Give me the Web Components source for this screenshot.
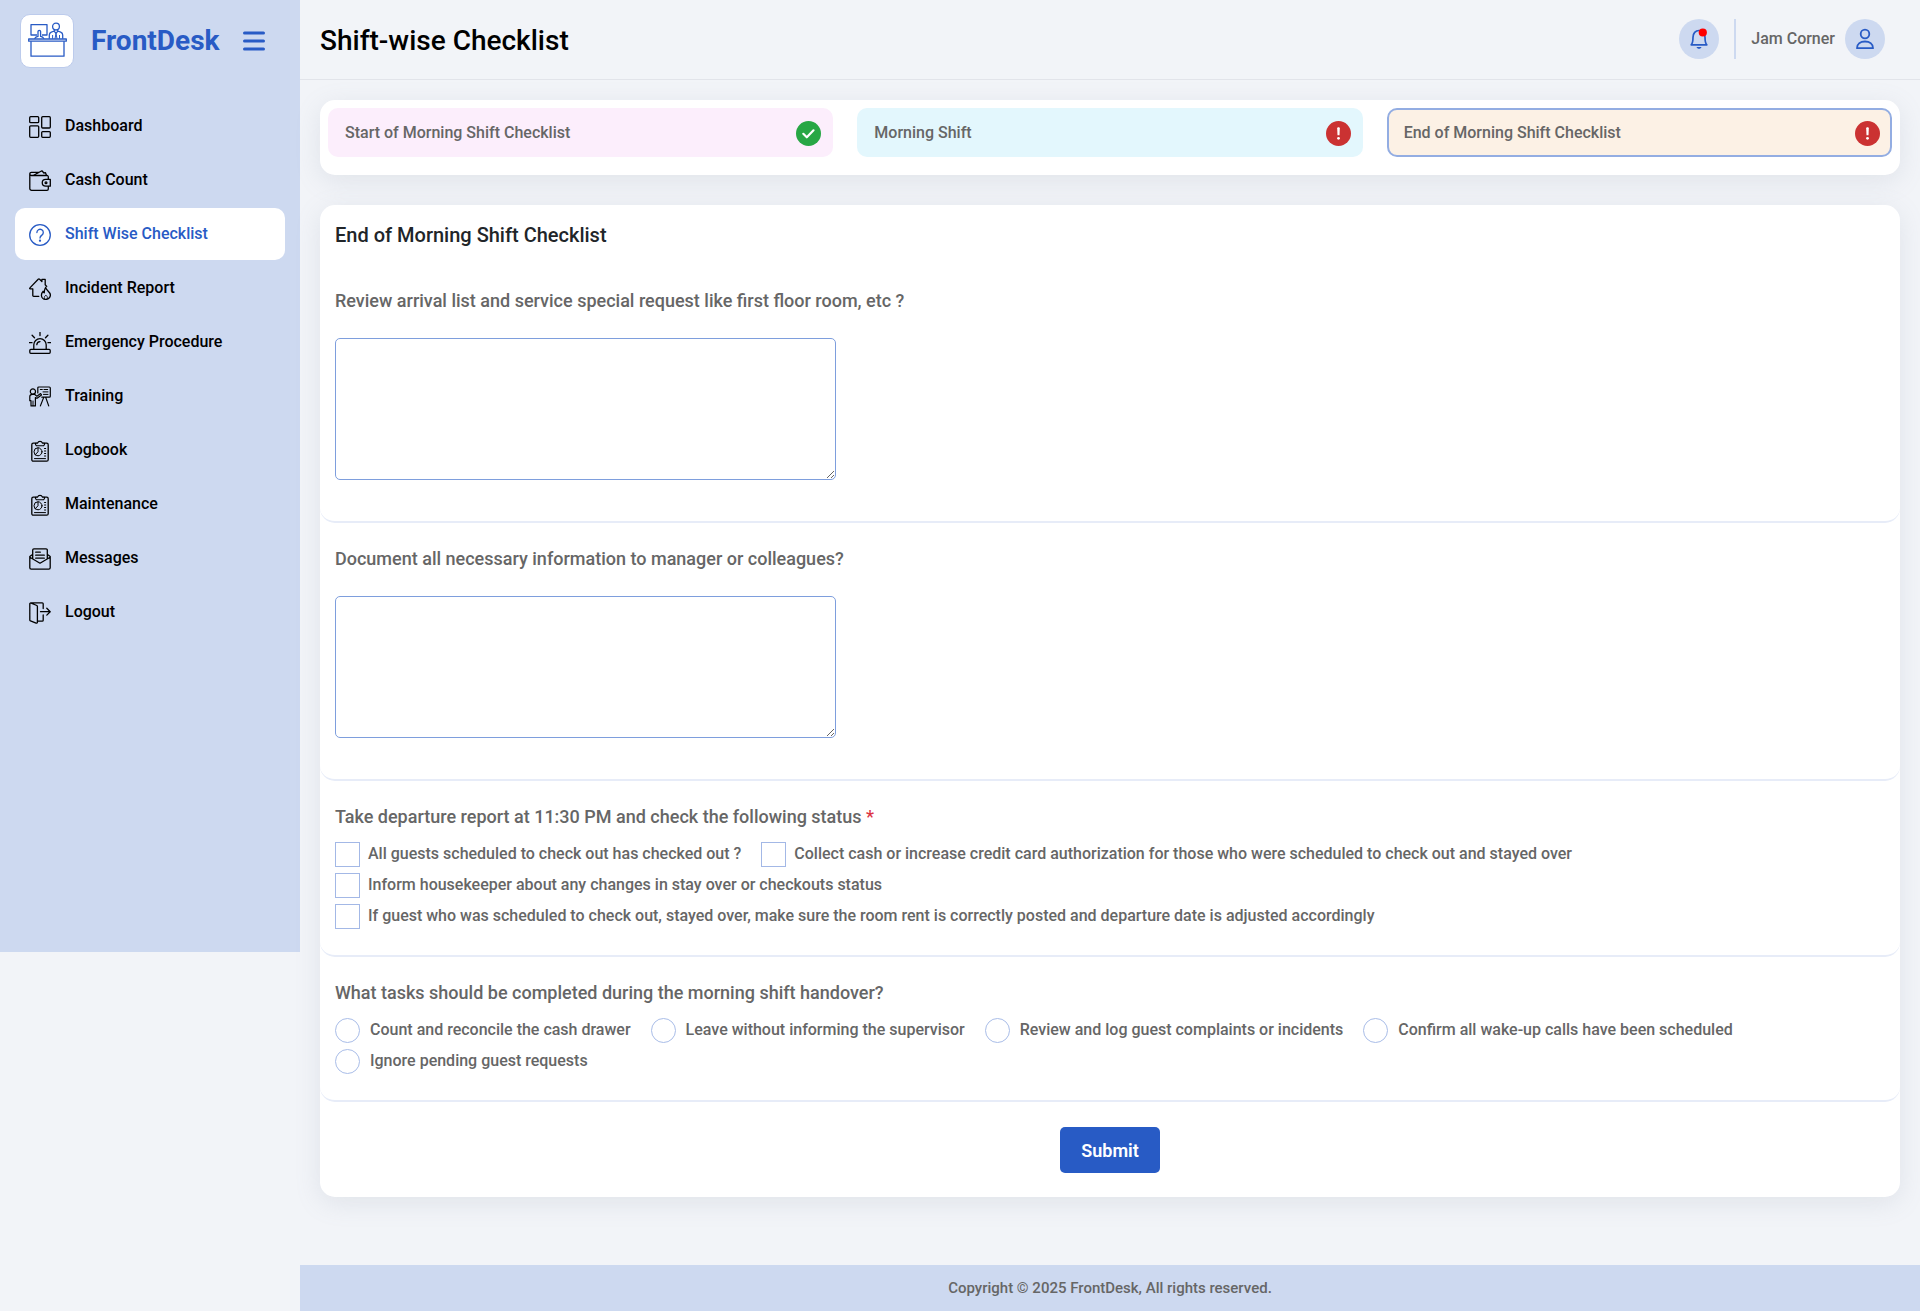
<!DOCTYPE html>
<html lang="en">
<head>
<meta charset="utf-8">
<meta name="viewport" content="width=device-width, initial-scale=1">
<title>Shift-wise Checklist</title>
<style>
  :root {
    --blue: #285bc5;
    --pale: #cdd9f0;
    --page: #f2f4f8;
    --muted: #666;
    --shadow: 0 6px 26px rgba(130, 140, 160, .16);
  }
  body {
    margin: 0;
    background: var(--page);
    color: var(--muted);
    font: 500 16px/24px Roboto, sans-serif;
  }
</style>
</head>
<body>
<fd-app>
  <fd-sidebar slot="side">
    <fd-nav-item icon="dashboard">Dashboard</fd-nav-item>
    <fd-nav-item icon="wallet">Cash Count</fd-nav-item>
    <fd-nav-item icon="help" active>Shift Wise Checklist</fd-nav-item>
    <fd-nav-item icon="incident">Incident Report</fd-nav-item>
    <fd-nav-item icon="siren">Emergency Procedure</fd-nav-item>
    <fd-nav-item icon="training">Training</fd-nav-item>
    <fd-nav-item icon="clipboard">Logbook</fd-nav-item>
    <fd-nav-item icon="clipboard">Maintenance</fd-nav-item>
    <fd-nav-item icon="mail">Messages</fd-nav-item>
    <fd-nav-item icon="logout">Logout</fd-nav-item>
  </fd-sidebar>
  <fd-topbar slot="top" user="Jam Corner">Shift-wise Checklist</fd-topbar>
  <fd-tabs>
    <fd-tab tone="pink" state="done">Start of Morning Shift Checklist</fd-tab>
    <fd-tab tone="cyan" state="due">Morning Shift</fd-tab>
    <fd-tab tone="sand" state="due" active>End of Morning Shift Checklist</fd-tab>
  </fd-tabs>
  <fd-checklist heading="End of Morning Shift Checklist">
    <fd-text-question>Review arrival list and service special request like first floor room, etc ?</fd-text-question>
    <fd-text-question>Document all necessary information to manager or colleagues?</fd-text-question>
    <fd-choice-question type="checkbox" name="departure" required question="Take departure report at 11:30 PM and check the following status">
      <span>All guests scheduled to check out has checked out ?</span>
      <span>Collect cash or increase credit card authorization for those who were scheduled to check out and stayed over</span>
      <span>Inform housekeeper about any changes in stay over or checkouts status</span>
      <span>If guest who was scheduled to check out, stayed over, make sure the room rent is correctly posted and departure date is adjusted accordingly</span>
    </fd-choice-question>
    <fd-choice-question type="radio" name="handover" question="What tasks should be completed during the morning shift handover?">
      <span>Count and reconcile the cash drawer</span>
      <span>Leave without informing the supervisor</span>
      <span>Review and log guest complaints or incidents</span>
      <span>Confirm all wake-up calls have been scheduled</span>
      <span>Ignore pending guest requests</span>
    </fd-choice-question>
  </fd-checklist>
  <fd-footer slot="foot">Copyright © 2025 FrontDesk, All rights reserved.</fd-footer>
</fd-app>

<script>
const ICONS = {
  dashboard: '<rect x=".7" y=".7" width="9" height="6" rx="1"/><rect x=".7" y="9.8" width="9" height="11.5" rx="1"/><rect x="12.7" y=".7" width="8.6" height="11.3" rx="1"/><rect x="12.7" y="15.6" width="8.6" height="5.7" rx="1"/>',
  wallet: '<path d="M19.3 9V6.8a1.3 1.3 0 0 0-1.3-1.3H2.4A1.6 1.6 0 0 1 2.4 2.3h3.8M.8 3.9v14.6a1.8 1.8 0 0 0 1.8 1.8H18a1.3 1.3 0 0 0 1.3-1.3v-2.5"/><path d="M4.8 5.2 12.9.8l2 2.2 1.6-.3.9 2.5M8 3.2l-1.5-.9h3"/><path d="M21.3 9.3h-4.6a3.4 3.4 0 0 0 0 6.9h4.6z"/><circle cx="17" cy="12.7" r=".9"/>',
  help: '<circle cx="11" cy="11" r="10.3"/><path d="M7.9 8.5a3.2 3.2 0 1 1 5 2.6c-1.2.8-1.9 1.5-1.9 3"/><circle cx="11" cy="16.7" r=".5" fill="currentColor"/>',
  incident: '<path d="M9.8 18.3H4.6a.8.8 0 0 1-.8-.8v-6.700H1.200c-.6 0-.7-.5-.3-.9L9.200 1.200a1 1 0 0 1 1.400 0l2.300 2.300V1.400h3.300v5.400l1.500 1.600"/><path d="M16.700 9.300c.2 3.200 4.700 4.300 4.700 7.700a4.500 4.300 0 0 1-9 .2c0-1.600.7-2.800 1.800-4 .1 1 .5 1.500 1.100 1.700-.1-2.300.3-4 1.400-5.600z"/><path d="M15.400 20.600c-.6-1.300.2-2.400 1.500-3.500 1.200 1.100 2 2.200 1.400 3.500" stroke-width=".8"/>',
  siren: '<rect x=".8" y="17.400" width="20.400" height="3.900" rx="1"/><path d="M4.800 17.200v-4.400a6.200 6.200 0 0 1 12.400 0v4.400M7.800 12.700A3.300 3.300 0 0 1 11 9.600M11 .3v3.200M3.100 3.200l2.400 2.600M18.900 3.200l-2.400 2.600M.3 10.700H3M19 10.700h2.700"/>',
  training: '<g stroke-width="1.200"><circle cx="3.900" cy="5.500" r="2.600"/><path d="M2 19.900v-5.200H.8v-4.200c0-1.500 1.200-2.200 2.600-2.200h2.100l2.400 1.900 3.700-2.600.9 1.300-4.400 3.300-1.700-.7v8.400zM8.800 6.900V2a1 1 0 0 1 1-1h10.500a1 1 0 0 1 1 1v8.200a1 1 0 0 1-1 1h-7.500M14.700 11.400l-3.300 8.500M16.700 11.400l3 8.500"/></g><path d="M4 15v4.700M11.300 3.500h2M15 3.500h3.700M14 5.900h5M14.500 8.400h4.500" stroke-width="1"/>',
  clipboard: '<rect x="2.800" y="3.200" width="16.400" height="18" rx="1.500"/><path d="M6.500 3.200h2.100a2.500 2.500 0 0 1 4.800 0h2.100v1.300l-1 1.300h-7l-1-1.300z" fill="var(--hole)" stroke-width="1.100"/><g stroke-width="1"><circle cx="9" cy="11.800" r="4"/><path d="M9 7.800v4l-2.700 2.800"/><path d="M5.500 18.600h11M15.500 8.500h1.200M15.500 11h1.200M15.500 13.500h1.200M15.500 16h1.200"/></g>',
  mail: '<path d="M3.700 10.700V2a1.200 1.200 0 0 1 1.200-1.200h12.200A1.200 1.200 0 0 1 18.300 2v8.700M3.500 6.400.8 8.600v11.200a1.400 1.400 0 0 0 1.400 1.400h17.600a1.400 1.400 0 0 0 1.400-1.400V8.600l-2.700-2.200M.9 9.300 11 15.200l10.100-5.900M6.700 4.200h4.600M6.700 7.200h8.600M6.700 10.200h8.600"/>',
  logout: '<path d="M8.400 19.200h4.800a1 1 0 0 0 1-1v-5.300M14.200 6.500V1.800a1 1 0 0 0-1-1H1.800a1 1 0 0 0-1 1v16.100a1 1 0 0 0 .7 1l5.600 2.200a1 1 0 0 0 1.300-1V4.400a1 1 0 0 0-.6-.9L1.600.9M11.500 9.700h9.700M17.800 6.300l3.400 3.400-3.400 3.400"/>'
};

/* Attaches an open shadow root holding the element's own markup and styles. */
const define = (name, render) => customElements.define(name, class extends HTMLElement {
  constructor() { super(); this.attachShadow({ mode: 'open' }); }
  connectedCallback() {
    const t = document.createElement('template');
    t.innerHTML = '<style>*{box-sizing:border-box}:host{box-sizing:border-box}</style>' + render(this);
    this.shadowRoot.replaceChildren(t.content.cloneNode(true));
  }
});

define('fd-app', () => `
  <style>
    :host { display: flex; align-items: flex-start; min-height: 100vh; }
    .page { flex: 1; min-width: 0; min-height: 100vh; display: flex; flex-direction: column; }
    main { flex: 1; display: flex; flex-direction: column; gap: 30px; padding: 20px 20px 60px; }
  </style>
  <slot name="side"></slot>
  <div class="page"><slot name="top"></slot><main><slot></slot></main><slot name="foot"></slot></div>`);

define('fd-sidebar', () => `
  <style>
    :host { display: block; width: 300px; height: 952px; flex: none; background: var(--pale); }
    .brand { display: flex; align-items: center; height: 81px; padding-left: 20px; color: var(--blue); }
    .logo { width: 54px; height: 54px; border: 1px solid #bccbec; border-radius: 10px; background: #fff; display: grid; place-items: center; }
    .name { font: 700 28px/36px Roboto, sans-serif; margin: 0 24px 0 17px; }
    button { border: 0; padding: 0; background: none; color: inherit; display: flex; }
    nav { display: flex; flex-direction: column; gap: 2px; padding: 19px 15px; }
  </style>
  <div class="brand">
    <span class="logo"><svg width="39" height="39" viewBox="0 0 39 39" fill="none" stroke="currentColor" stroke-width="1.300" stroke-linejoin="round">
      <path d="M9 14H3V3.600h16V14h-5"/><path d="M6.500 17.800c.8-1.500 2-2.200 3.500-2.400V10.500c0-1.400 2.600-1.400 2.600 0v4.900c1.400.2 2.600.9 3.400 2.400"/>
      <circle cx="28" cy="5.600" r="3.400"/><path d="M26.300 8.700v1.300l-3 1.100c-1.300.5-2 1.500-2 2.900v3.800M29.700 8.700v1.300l3 1.100c1.300.5 2 1.500 2 2.900v3.800M26.300 10.300l1.700 2 1.700-2"/>
      <path d="M28 12.300l-1 5.500M28 12.300l1 5.500M24.600 14v3.800M31.500 14v3.800" stroke-width="1"/>
      <rect x=".7" y="18" width="37.600" height="2.200"/><path d="M3 20.200v15h33v-15"/></svg></span>
    <span class="name">FrontDesk</span>
    <button aria-label="Toggle menu"><svg width="22" height="20" viewBox="0 0 22 20" stroke="currentColor" stroke-width="3" stroke-linecap="round"><path d="M1.500 2h19M1.500 10h19M1.500 18h19"/></svg></button>
  </div>
  <nav><slot></slot></nav>`);

define('fd-nav-item', el => `
  <style>
    :host { display: block; --hole: var(--pale); }
    a { display: flex; gap: 14px; height: 52px; padding: 14px; border-radius: 10px; color: #000; text-decoration: none; }
    :host([active]) a { background: #fff; color: var(--blue); }
    svg { flex: none; margin-top: 2px; }
  </style>
  <a href="#"><svg width="22" height="22" viewBox="0 0 22 22" fill="none" stroke="currentColor" stroke-width="1.300" stroke-linecap="round" stroke-linejoin="round">${ICONS[el.getAttribute('icon')]}</svg><slot></slot></a>`);

define('fd-topbar', el => `
  <style>
    :host { display: flex; align-items: center; justify-content: space-between; height: 80px; padding: 0 35px 1px 20px; border-bottom: 1px solid #e2e4ea; }
    h1 { margin: 0; font: 500 28px/36px Roboto, sans-serif; color: #000; padding-top: 3px; }
    .tools { display: flex; align-items: center; }
    button { width: 40px; height: 40px; border: 0; border-radius: 50%; padding: 0; background: var(--pale); color: var(--blue); display: grid; place-items: center; }
    i { width: 2px; height: 40px; margin: 0 15px; background: var(--pale); }
    .user { margin-right: 10px; }
  </style>
  <h1><slot></slot></h1>
  <div class="tools">
    <button aria-label="Notifications"><svg width="20" height="22" viewBox="0 0 20 22" fill="none" stroke="currentColor" stroke-width="1.700" stroke-linejoin="round"><path d="M2.200 16.800c1.500-1.600 1.800-3.300 1.800-7.600C4 5.300 6.500 2.500 10 2.500s6 2.800 6 6.700c0 4.300.3 6 1.800 7.600z"/><path d="M7.500 19h5c-.4 1.200-1.300 1.800-2.500 1.800S7.900 20.200 7.500 19z" fill="currentColor" stroke="none"/><circle cx="13.800" cy="4.500" r="4.100" fill="#f00" stroke="none"/></svg></button>
    <i></i><span class="user">${el.getAttribute('user')}</span>
    <button aria-label="Account"><svg width="20" height="22" viewBox="0 0 20 22" fill="none" stroke="currentColor" stroke-width="1.800" stroke-linejoin="round"><circle cx="10" cy="6" r="4.300"/><path d="M2 20.200c0-4.200 3.400-6.700 8-6.700s8 2.500 8 6.700z"/></svg></button>
  </div>`);

define('fd-tabs', () => `
  <style>:host { display: grid; grid-template-columns: repeat(3, 1fr); gap: 24px; padding: 8px 8px 18px; border-radius: 15px; background: #fff; box-shadow: var(--shadow); }</style>
  <slot></slot>`);

define('fd-tab', el => `
  <style>
    button { display: flex; justify-content: space-between; width: 100%; height: 49px; padding: 11px 10px 9px 15px; border: 2px solid transparent; border-radius: 10px; font: inherit; color: inherit; text-align: left; }
    :host([tone=pink]) button { background: #fceefc; }
    :host([tone=cyan]) button { background: #e3f7fd; }
    :host([tone=sand]) button { background: #fcf1e5; }
    :host([active]) button { border-color: #93ade2; }
    svg { flex: none; }
  </style>
  <button><slot></slot><svg width="25" height="25" viewBox="0 0 25 25">${el.getAttribute('state') === 'done'
    ? '<circle cx="12.500" cy="12.500" r="12.500" fill="#28a745"/><path d="M7.300 12.800l3.500 3.500 6.700-7" fill="none" stroke="#fff" stroke-width="2.200" stroke-linecap="round" stroke-linejoin="round"/>'
    : '<circle cx="12.500" cy="12.500" r="12.500" fill="#cb3232"/><path d="M11.200 7.200c0-1.300 2.600-1.300 2.600 0l-.3 7h-2z" fill="#fff"/><circle cx="12.500" cy="17.300" r="1.400" fill="#fff"/>'}</svg></button>`);

define('fd-checklist', el => `
  <style>
    :host { display: block; border-radius: 15px; background: #fff; box-shadow: var(--shadow); }
    h2 { margin: 0; padding: 15px; font: 500 20px/30px Roboto, sans-serif; color: #212529; }
    .actions { display: flex; justify-content: center; padding: 25px 24px 24px; }
    button { height: 46px; min-width: 100px; padding: 0 20px; border: 0; border-radius: 5px; background: var(--blue); color: #fff; font: 600 18px/27px Roboto, sans-serif; }
  </style>
  <form onsubmit="return false"><h2>${el.getAttribute('heading')}</h2><slot></slot><div class="actions"><button>Submit</button></div></form>`);

const QUESTION = `
  :host { display: block; border-bottom: 2px solid #e7ecf8; border-radius: 15px; }
  .q { display: block; padding: 0; margin: 0; font: 500 18px/27px Roboto, sans-serif; }`;

define('fd-text-question', () => `
  <style>${QUESTION}
    :host { padding: 22px 15px 41px; }
    .grid { display: grid; grid-template-columns: repeat(3, 1fr); gap: 24px; margin-top: 24px; }
    textarea { display: block; width: 100%; height: 142px; padding: 10px; border: 1px solid #7e9edd; border-radius: 5px; background: #fff; font: inherit; color: inherit; }
  </style>
  <label class="q" for="answer"><slot></slot></label>
  <div class="grid"><textarea id="answer"></textarea></div>`);

define('fd-choice-question', el => {
  const type = el.getAttribute('type'), name = el.getAttribute('name');
  const rows = [...el.children].map((c, i) => {
    c.slot = 'c' + i;
    return `<label><input type="${type}" name="${name}"><slot name="c${i}"></slot></label>`;
  }).join('');
  return `
  <style>${QUESTION}
    :host { padding: 22px 15px 26px; }
    fieldset { border: 0; margin: 0; padding: 0; min-width: 0; }
    em { font-style: normal; color: #dc3545; }
    .list { display: flex; flex-wrap: wrap; gap: 6px 20px; padding-top: 12px; }
    label { display: flex; gap: 8px; }
    input { appearance: none; flex: none; width: 25px; height: 25px; margin: 0; border: 1px solid #a3b8e6; background: #fff; }
    input[type=radio] { border-radius: 50%; margin-right: 2px; border-color: #a9bde8; }
    input:checked { background: var(--blue); }
  </style>
  <fieldset><legend class="q">${el.getAttribute('question')}${el.hasAttribute('required') ? ' <em>*</em>' : ''}</legend><div class="list">${rows}</div></fieldset>`;
});

define('fd-footer', () => `
  <style>:host { display: block; padding: 11px 20px; background: var(--pale); text-align: center; font: 500 15px/24px Roboto, sans-serif; }</style>
  <slot></slot>`);
</script>
</body>
</html>
